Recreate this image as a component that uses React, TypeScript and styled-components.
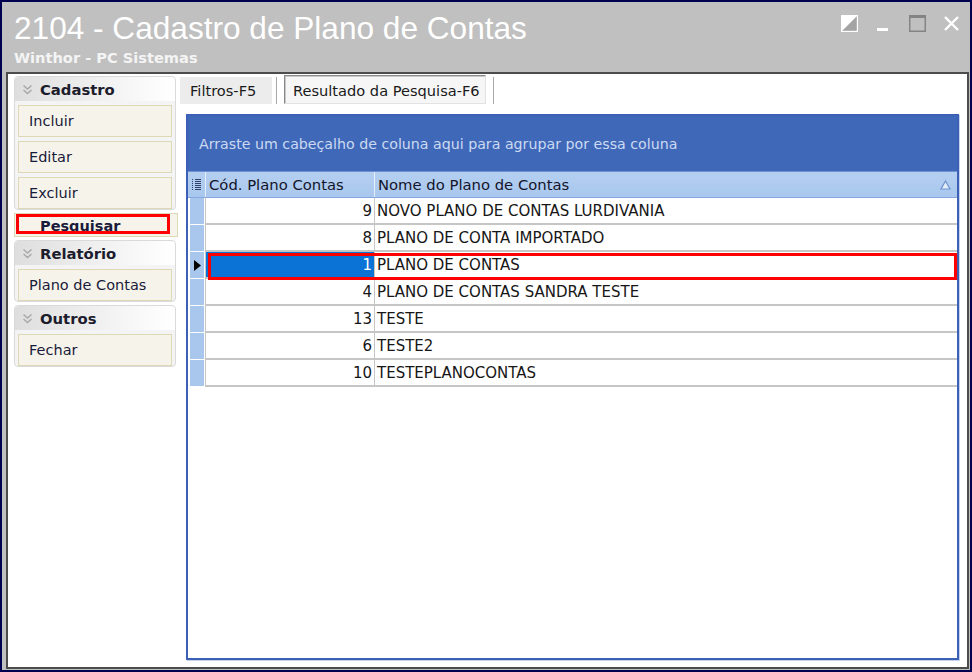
import * as React from 'react'
import styled, {createGlobalStyle} from 'styled-components'

const GlobalStyle = createGlobalStyle`
  html, body {
    margin: 0;
    padding: 0;
    background: #000050;
  }
  * {
    box-sizing: border-box;
  }
`

const UI_FONT = `"DejaVu Sans", "Liberation Sans", sans-serif`

const Window = styled.div`
  width: 972px;
  height: 672px;
  border: 2px solid #00004e;
  background: #c0c0c0;
  display: flex;
  flex-direction: column;
  overflow: hidden;
`

const TitleBar = styled.div`
  height: 70px;
  display: flex;
  justify-content: space-between;
  align-items: flex-start;
  padding: 8px 0 0 12px;
`

const Titles = styled.div`
  display: flex;
  flex-direction: column;
`

const Title = styled.h1`
  margin: 0;
  font-family: "Liberation Sans", Arial, sans-serif;
  font-weight: normal;
  font-size: 31.6px;
  line-height: 37px;
  color: #ffffff;
`

const Subtitle = styled.div`
  font-family: ${UI_FONT};
  font-weight: bold;
  font-size: 14.6px;
  line-height: 17px;
  color: #f4f4f4;
  margin-top: 2px;
`

const Controls = styled.div`
  display: flex;
  gap: 17px;
  padding: 5px 10px 0 0;
`

const ControlButton = styled.div`
  width: 17px;
  height: 17px;
  display: flex;
  align-items: center;
  justify-content: center;
`

const Body = styled.div`
  flex: 1;
  margin: 0 1px 1px 4px;
  border: 2px solid #4c4c4c;
  background: #ffffff;
  display: flex;
  min-height: 0;
`

const Sidebar = styled.div`
  width: 170px;
  padding: 2px 0 0 6px;
  display: flex;
  flex-direction: column;
  gap: 3px;
`

const Group = styled.div`
  width: 162px;
  border: 1px solid #dadada;
  border-radius: 4px;
  background: #f4f4f4;
`

const GroupHeader = styled.div`
  height: 24px;
  display: flex;
  align-items: center;
  gap: 7px;
  padding-left: 7px;
  border-radius: 4px 4px 0 0;
  background: linear-gradient(to right, #dedede, #f6f6f6 70%, #ffffff);
  font-family: ${UI_FONT};
  font-weight: bold;
  font-size: 14.8px;
  color: #1c1c2c;
`

const GroupItems = styled.div`
  display: flex;
  flex-direction: column;
  gap: 4px;
  padding: 4px 3px 0 3px;
`

const Item = styled.div<{$bold?: boolean}>`
  position: relative;
  height: ${p => (p.$bold ? '24px' : '32px')};
  border: 1px solid #ddd8b6;
  background: #f6f4ea;
  display: flex;
  align-items: ${p => (p.$bold ? 'flex-end' : 'center')};
  padding-left: ${p => (p.$bold ? '25px' : '10px')};
  padding-bottom: ${p => (p.$bold ? '1px' : '0')};
  font-family: ${UI_FONT};
  font-size: 14.5px;
  font-weight: ${p => (p.$bold ? 'bold' : 'normal')};
  color: #1a1a3a;
  line-height: 17px;
  overflow: hidden;
`

const Highlight = styled.div<{$top: number; $left: number; $right: number; $bottom: number}>`
  position: absolute;
  top: ${p => p.$top}px;
  left: ${p => p.$left}px;
  right: ${p => p.$right}px;
  bottom: ${p => p.$bottom}px;
  border: 3px solid #ff0000;
  pointer-events: none;
`

const Main = styled.div`
  flex: 1;
  display: flex;
  flex-direction: column;
  padding: 1px 8px 7px 2px;
  min-width: 0;
`

const Tabs = styled.div`
  height: 29px;
  display: flex;
  align-items: stretch;
`

const Tab = styled.div<{$active?: boolean}>`
  display: flex;
  align-items: center;
  padding: ${p => (p.$active ? '2px 0 0 8px' : '0 0 0 10px')};
  width: ${p => (p.$active ? '202px' : '92px')};
  margin-top: ${p => (p.$active ? '0' : '2px')};
  margin-right: ${p => (p.$active ? '7px' : '4px')};
  background: ${p => (p.$active ? '#f6f6f6' : '#ececec')};
  border: ${p => (p.$active ? '1px solid #8a8a8a' : 'none')};
  border-right-color: ${p => (p.$active ? '#e2e2e2' : 'transparent')};
  border-bottom-color: ${p => (p.$active ? '#e2e2e2' : 'transparent')};
  box-shadow: ${p => (p.$active ? 'inset 1px 1px 0 #c8c8c8' : 'none')};
  font-family: ${UI_FONT};
  font-size: 14.6px;
  color: #1a1a1a;
  white-space: nowrap;
`

const TabSeparator = styled.div`
  width: 2px;
  margin: 2px 6px 0 0;
  background: linear-gradient(to right, #a8a8a8 50%, #ffffff 50%);
`

const GridFrame = styled.div`
  flex: 1;
  margin: 10px 0 0 6px;
  border: 2px solid #3b60b6;
  box-shadow: 1px 1px 0 #c4d2ee;
  display: flex;
  flex-direction: column;
  background: #ffffff;
`

const GroupPanel = styled.div`
  height: 55px;
  background: #4068b9;
  display: flex;
  align-items: center;
  padding: 1px 0 0 11px;
  font-family: ${UI_FONT};
  font-size: 14.2px;
  color: #cbdaf2;
  white-space: nowrap;
`

const HeaderRow = styled.div`
  display: grid;
  grid-template-columns: 17px 169px 1fr;
  height: 27px;
  background: linear-gradient(#b4cff0, #a9c7ee);
  border-top: 1px solid #6f93d2;
  border-bottom: 1px solid #86a8dc;
`

const HeaderCell = styled.div`
  display: flex;
  align-items: center;
  justify-content: space-between;
  padding: 0 6px 0 3px;
  border-left: 1px solid #e6eefa;
  font-family: ${UI_FONT};
  font-size: 14.8px;
  color: #14142a;
  white-space: nowrap;
`

const IndicatorHeader = styled.div`
  display: flex;
  align-items: center;
  justify-content: center;
`

const Row = styled.div`
  display: grid;
  grid-template-columns: 17px 169px 1fr;
  height: 27px;
`

const Indicator = styled.div`
  background: #a9c6ec;
  border: 1px solid #ffffff;
  border-left: 2px solid #ffffff;
  border-top: none;
  display: flex;
  align-items: center;
  justify-content: center;
`

const Cell = styled.div<{$numeric?: boolean; $selected?: boolean}>`
  display: flex;
  align-items: center;
  justify-content: ${p => (p.$numeric ? 'flex-end' : 'flex-start')};
  padding: ${p => (p.$numeric ? '0 2px 0 0' : '0 0 0 2px')};
  border-left: 1px solid #c6c6c6;
  border-bottom: 2px solid #c6c6c6;
  background: ${p => (p.$selected ? '#0b72d6' : '#ffffff')};
  color: ${p => (p.$selected ? '#ffffff' : '#161616')};
  font-family: ${UI_FONT};
  font-size: 15px;
  white-space: nowrap;
`

const RowArea = styled.div`
  position: relative;
`

const Chevron = () => (
  <svg width="11" height="11" viewBox="0 0 11 11">
    <path d="M1.5 1.5 L5.5 5 L9.5 1.5 M1.5 6 L5.5 9.5 L9.5 6" fill="none" stroke="#a8a8a8" strokeWidth="1.4" />
  </svg>
)

const ColumnsIcon = () => (
  <svg width="9" height="12" viewBox="0 0 9 12">
    {[1, 3, 5, 7, 9, 11].map(y => (
      <g key={y}>
        <rect x="0" y={y - 1} width="1" height="1" fill="#30406a" />
        <rect x="3" y={y - 1} width="6" height="1" fill="#30406a" />
      </g>
    ))}
  </svg>
)

const rows = [
  {code: 9, name: 'NOVO PLANO DE CONTAS LURDIVANIA'},
  {code: 8, name: 'PLANO DE CONTA IMPORTADO'},
  {code: 1, name: 'PLANO DE CONTAS', current: true},
  {code: 4, name: 'PLANO DE CONTAS SANDRA TESTE'},
  {code: 13, name: 'TESTE'},
  {code: 6, name: 'TESTE2'},
  {code: 10, name: 'TESTEPLANOCONTAS'},
]

const App = () => (
  <Window>
    <GlobalStyle />
    <TitleBar>
      <Titles>
        <Title>2104 - Cadastro de Plano de Contas</Title>
        <Subtitle>Winthor - PC Sistemas</Subtitle>
      </Titles>
      <Controls>
        <ControlButton>
          <svg width="17" height="17" viewBox="0 0 17 17">
            <rect x="0.5" y="0.5" width="16" height="16" fill="#a4a4a4" stroke="#ffffff" strokeWidth="1.4" />
            <path d="M1 1 H16 L1 16 Z" fill="#ffffff" />
          </svg>
        </ControlButton>
        <ControlButton>
          <svg width="17" height="17" viewBox="0 0 17 17">
            <rect x="2" y="13" width="11" height="3" fill="#ffffff" />
          </svg>
        </ControlButton>
        <ControlButton>
          <svg width="17" height="17" viewBox="0 0 17 17">
            <rect x="0.75" y="0.75" width="15.5" height="15.5" fill="none" stroke="#848484" strokeWidth="1.5" />
            <rect x="0" y="0" width="17" height="3" fill="#848484" />
          </svg>
        </ControlButton>
        <ControlButton>
          <svg width="17" height="17" viewBox="0 0 17 17">
            <path d="M2 2 L15 15 M15 2 L2 15" stroke="#ffffff" strokeWidth="2.4" />
          </svg>
        </ControlButton>
      </Controls>
    </TitleBar>

    <Body>
      <Sidebar>
        <Group>
          <GroupHeader><Chevron />Cadastro</GroupHeader>
          <GroupItems>
            <Item>Incluir</Item>
            <Item>Editar</Item>
            <Item>Excluir</Item>
          </GroupItems>
        </Group>
        <Item $bold={true}>
          Pesquisar
          <Highlight $top={0} $left={1} $right={7} $bottom={2} />
        </Item>
        <Group>
          <GroupHeader><Chevron />Relatório</GroupHeader>
          <GroupItems>
            <Item>Plano de Contas</Item>
          </GroupItems>
        </Group>
        <Group>
          <GroupHeader><Chevron />Outros</GroupHeader>
          <GroupItems>
            <Item>Fechar</Item>
          </GroupItems>
        </Group>
      </Sidebar>

      <Main>
        <Tabs>
          <Tab>Filtros-F5</Tab>
          <TabSeparator />
          <Tab $active={true}>Resultado da Pesquisa-F6</Tab>
          <TabSeparator />
        </Tabs>

        <GridFrame>
          <GroupPanel>Arraste um cabeçalho de coluna aqui para agrupar por essa coluna</GroupPanel>
          <HeaderRow>
            <IndicatorHeader><ColumnsIcon /></IndicatorHeader>
            <HeaderCell>Cód. Plano Contas</HeaderCell>
            <HeaderCell>
              Nome do Plano de Contas
              <svg width="11" height="10" viewBox="0 0 11 10">
                <path d="M5.5 1 L10 9 H1 Z" fill="#e4ecf8" stroke="#6f93d2" strokeWidth="1.2" />
              </svg>
            </HeaderCell>
          </HeaderRow>
          <RowArea>
            {rows.map(r => (
              <Row key={r.code}>
                <Indicator>
                  {r.current && (
                    <svg width="7" height="11" viewBox="0 0 7 11">
                      <path d="M0 0 L7 5.5 L0 11 Z" fill="#000000" />
                    </svg>
                  )}
                </Indicator>
                <Cell $numeric={true} $selected={r.current}>{r.code}</Cell>
                <Cell>{r.name}</Cell>
              </Row>
            ))}
            <Highlight $top={55} $left={20} $right={0} $bottom={107} />
          </RowArea>
        </GridFrame>
      </Main>
    </Body>
  </Window>
)

export default App
